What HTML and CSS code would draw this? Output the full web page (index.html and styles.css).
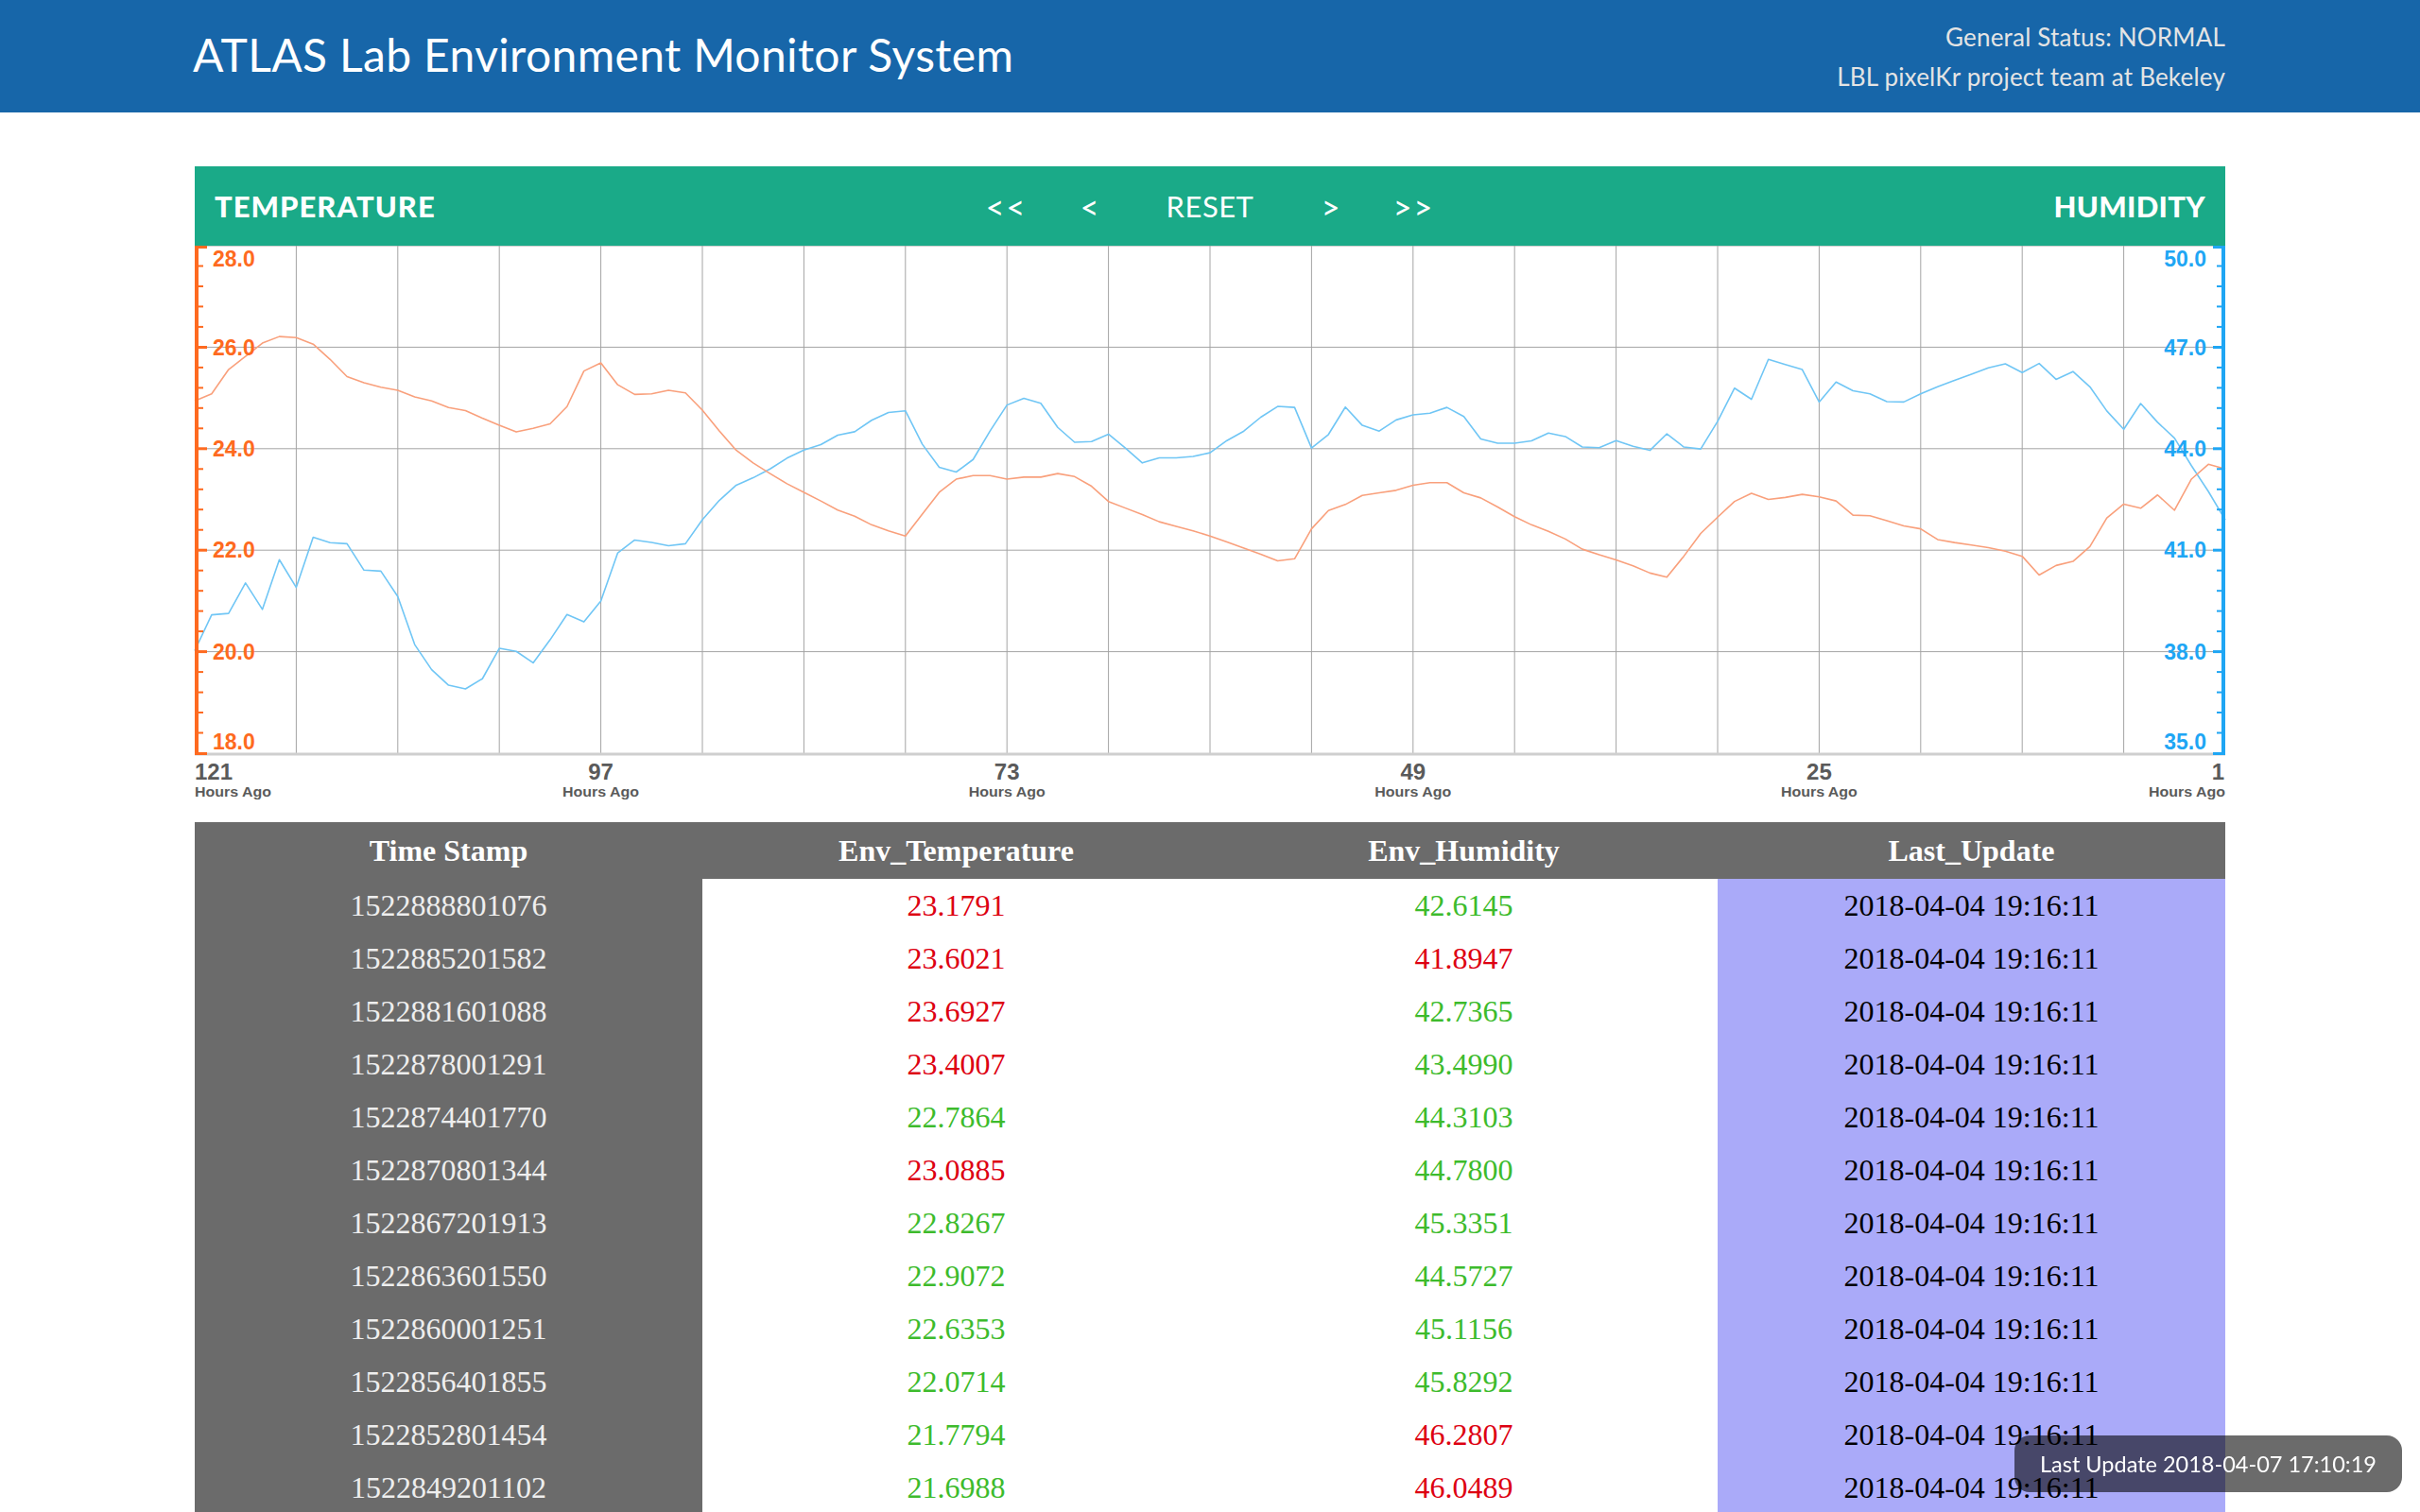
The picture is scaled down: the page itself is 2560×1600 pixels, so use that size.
FILE: index.html
```html
<!DOCTYPE html>
<html lang="en">
<head>
<meta charset="utf-8">
<title>ATLAS Lab Environment Monitor System</title>
<link rel="stylesheet" href="styles.css">
</head>
<body>
<header class="topbar">
  <h1 class="title">ATLAS Lab Environment Monitor System</h1>
  <div class="status">
    <div>General Status: NORMAL</div>
    <div>LBL pixelKr project team at Bekeley</div>
  </div>
</header>

<main class="content">
  <section class="chart-panel">
    <div class="chart-head">
      <span class="axis-title">TEMPERATURE</span>
      <nav class="chart-nav">
        <button class="nav-btn wide">&lt;&lt;</button>
        <button class="nav-btn narrow">&lt;</button>
        <button class="nav-btn reset">RESET</button>
        <button class="nav-btn narrow">&gt;</button>
        <button class="nav-btn wide">&gt;&gt;</button>
      </nav>
      <span class="axis-title right">HUMIDITY</span>
    </div>

    <svg class="chart" width="2148" height="610" viewBox="0 0 2148 610">
      <g class="grid">
        <line x1="0" y1="0.5" x2="2148" y2="0.5" class="border"/>
        <line x1="107.4" y1="0" x2="107.4" y2="538"/>
        <line x1="214.8" y1="0" x2="214.8" y2="538"/>
        <line x1="322.2" y1="0" x2="322.2" y2="538"/>
        <line x1="429.6" y1="0" x2="429.6" y2="538"/>
        <line x1="537" y1="0" x2="537" y2="538"/>
        <line x1="644.4" y1="0" x2="644.4" y2="538"/>
        <line x1="751.8" y1="0" x2="751.8" y2="538"/>
        <line x1="859.2" y1="0" x2="859.2" y2="538"/>
        <line x1="966.6" y1="0" x2="966.6" y2="538"/>
        <line x1="1074" y1="0" x2="1074" y2="538"/>
        <line x1="1181.4" y1="0" x2="1181.4" y2="538"/>
        <line x1="1288.8" y1="0" x2="1288.8" y2="538"/>
        <line x1="1396.2" y1="0" x2="1396.2" y2="538"/>
        <line x1="1503.6" y1="0" x2="1503.6" y2="538"/>
        <line x1="1611" y1="0" x2="1611" y2="538"/>
        <line x1="1718.4" y1="0" x2="1718.4" y2="538"/>
        <line x1="1825.8" y1="0" x2="1825.8" y2="538"/>
        <line x1="1933.2" y1="0" x2="1933.2" y2="538"/>
        <line x1="2040.6" y1="0" x2="2040.6" y2="538"/>
        <line x1="0" y1="107.4" x2="2148" y2="107.4"/>
        <line x1="0" y1="214.8" x2="2148" y2="214.8"/>
        <line x1="0" y1="322.2" x2="2148" y2="322.2"/>
        <line x1="0" y1="429.6" x2="2148" y2="429.6"/>
        <line x1="0" y1="538" x2="2148" y2="538" class="baseline"/>
      </g>

      <polyline class="line-hum" transform="matrix(17.9 0 0 -35.8 0 1790)" points="0,38.03 1,39.09 2,39.13 3,40.03 4,39.25 5,40.72 6,39.90 7,41.38 8,41.22 9,41.19 10,40.41 11,40.38 12,39.63 13,38.21 14,37.47 15,37.01 16,36.90 17,37.20 18,38.10 19,38.01 20,37.67 21,38.35 22,39.10 23,38.88 24,39.50 25,40.92 26,41.30 27,41.23 28,41.13 29,41.19 30,41.90 31,42.47 32,42.92 33,43.14 34,43.40 35,43.72 36,43.96 37,44.12 38,44.40 39,44.50 40,44.84 41,45.07 42,45.12 43,44.13 44,43.45 45,43.31 46,43.68 47,44.52 48,45.29 49,45.49 50,45.34 51,44.63 52,44.19 53,44.21 54,44.43 55,44.02 56,43.58 57,43.73 58,43.73 59,43.77 60,43.88 61,44.24 62,44.52 63,44.93 64,45.25 65,45.22 66,44.02 67,44.42 68,45.23 69,44.69 70,44.52 71,44.85 72,45.00 73,45.05 74,45.22 75,44.95 76,44.29 77,44.16 78,44.16 79,44.23 80,44.46 81,44.36 82,44.05 83,44.03 84,44.24 85,44.07 86,43.95 87,44.44 88,44.05 89,43.99 90,44.81 91,45.79 92,45.46 93,46.64 94,46.49 95,46.34 96,45.38 97,45.97 98,45.71 99,45.62 100,45.39 101,45.38 102,45.62 103,45.83 104,46.02 105,46.20 106,46.39 107,46.51 108,46.25 109,46.52 110,46.0489 111,46.2807 112,45.8292 113,45.1156 114,44.5727 115,45.3351 116,44.78 117,44.3103 118,43.499 119,42.7365 120,41.8947"/>

      <polyline class="line-temp" transform="matrix(17.9 0 0 -53.7 0 1503.6)" points="0,24.94 1,25.08 2,25.56 3,25.82 4,26.08 5,26.21 6,26.19 7,26.06 8,25.76 9,25.42 10,25.30 11,25.21 12,25.15 13,25.02 14,24.94 15,24.81 16,24.75 17,24.60 18,24.46 19,24.33 20,24.40 21,24.49 22,24.83 23,25.53 24,25.69 25,25.26 26,25.07 27,25.08 28,25.15 29,25.10 30,24.76 31,24.35 32,23.97 33,23.72 34,23.51 35,23.31 36,23.14 37,22.97 38,22.79 39,22.67 40,22.50 41,22.38 42,22.28 43,22.71 44,23.14 45,23.40 46,23.47 47,23.47 48,23.40 49,23.44 50,23.44 51,23.51 52,23.45 53,23.26 54,22.96 55,22.83 56,22.70 57,22.56 58,22.47 59,22.38 60,22.28 61,22.16 62,22.04 63,21.92 64,21.79 65,21.83 66,22.42 67,22.78 68,22.90 69,23.08 70,23.13 71,23.18 72,23.28 73,23.33 74,23.33 75,23.13 76,23.03 77,22.85 78,22.66 79,22.50 80,22.37 81,22.22 82,22.02 83,21.91 84,21.81 85,21.69 86,21.55 87,21.47 88,21.88 89,22.33 90,22.65 91,22.96 92,23.12 93,23.00 94,23.04 95,23.10 96,23.05 97,22.97 98,22.69 99,22.68 100,22.58 101,22.48 102,22.42 103,22.21 104,22.15 105,22.10 106,22.05 107,21.98 108,21.88 109,21.51 110,21.6988 111,21.7794 112,22.0714 113,22.6353 114,22.9072 115,22.8267 116,23.0885 117,22.7864 118,23.4007 119,23.6927 120,23.6021"/>

      <g class="axis-left">
        <rect x="0" y="0" width="4" height="539"/>
        <rect x="0" y="0" width="13" height="3"/>
        <rect x="0" y="536" width="13" height="3"/>
        <rect x="4" y="20.5" width="5" height="2"/>
        <rect x="4" y="42" width="5" height="2"/>
        <rect x="4" y="63.4" width="5" height="2"/>
        <rect x="4" y="84.9" width="5" height="2"/>
        <rect x="4" y="106" width="9" height="3"/>
        <rect x="4" y="127.9" width="5" height="2"/>
        <rect x="4" y="149.4" width="5" height="2"/>
        <rect x="4" y="170.8" width="5" height="2"/>
        <rect x="4" y="192.3" width="5" height="2"/>
        <rect x="4" y="213.3" width="9" height="3"/>
        <rect x="4" y="235.3" width="5" height="2"/>
        <rect x="4" y="256.8" width="5" height="2"/>
        <rect x="4" y="278.2" width="5" height="2"/>
        <rect x="4" y="299.7" width="5" height="2"/>
        <rect x="4" y="320.7" width="9" height="3"/>
        <rect x="4" y="342.7" width="5" height="2"/>
        <rect x="4" y="364.2" width="5" height="2"/>
        <rect x="4" y="385.6" width="5" height="2"/>
        <rect x="4" y="407.1" width="5" height="2"/>
        <rect x="4" y="428.1" width="9" height="3"/>
        <rect x="4" y="450.1" width="5" height="2"/>
        <rect x="4" y="471.6" width="5" height="2"/>
        <rect x="4" y="493" width="5" height="2"/>
        <rect x="4" y="514.5" width="5" height="2"/>
        <text x="19" y="22">28.0</text>
        <text x="19" y="115.6">26.0</text>
        <text x="19" y="223">24.0</text>
        <text x="19" y="330.4">22.0</text>
        <text x="19" y="437.8">20.0</text>
        <text x="19" y="532.5">18.0</text>
      </g>

      <g class="axis-right">
        <rect x="2144" y="0" width="4" height="539"/>
        <rect x="2135" y="0" width="13" height="3"/>
        <rect x="2135" y="536" width="13" height="3"/>
        <rect x="2139" y="20.5" width="5" height="2"/>
        <rect x="2139" y="42" width="5" height="2"/>
        <rect x="2139" y="63.4" width="5" height="2"/>
        <rect x="2139" y="84.9" width="5" height="2"/>
        <rect x="2135" y="106" width="9" height="3"/>
        <rect x="2139" y="127.9" width="5" height="2"/>
        <rect x="2139" y="149.4" width="5" height="2"/>
        <rect x="2139" y="170.8" width="5" height="2"/>
        <rect x="2139" y="192.3" width="5" height="2"/>
        <rect x="2135" y="213.3" width="9" height="3"/>
        <rect x="2139" y="235.3" width="5" height="2"/>
        <rect x="2139" y="256.8" width="5" height="2"/>
        <rect x="2139" y="278.2" width="5" height="2"/>
        <rect x="2139" y="299.7" width="5" height="2"/>
        <rect x="2135" y="320.7" width="9" height="3"/>
        <rect x="2139" y="342.7" width="5" height="2"/>
        <rect x="2139" y="364.2" width="5" height="2"/>
        <rect x="2139" y="385.6" width="5" height="2"/>
        <rect x="2139" y="407.1" width="5" height="2"/>
        <rect x="2135" y="428.1" width="9" height="3"/>
        <rect x="2139" y="450.1" width="5" height="2"/>
        <rect x="2139" y="471.6" width="5" height="2"/>
        <rect x="2139" y="493" width="5" height="2"/>
        <rect x="2139" y="514.5" width="5" height="2"/>
        <text x="2128" y="22">50.0</text>
        <text x="2128" y="115.6">47.0</text>
        <text x="2128" y="223">44.0</text>
        <text x="2128" y="330.4">41.0</text>
        <text x="2128" y="437.8">38.0</text>
        <text x="2128" y="532.5">35.0</text>
      </g>

      <g class="x-labels">
        <text class="hour start" x="0" y="565">121</text>
        <text class="ago start" x="0" y="583" textLength="81" lengthAdjust="spacingAndGlyphs">Hours Ago</text>
        <text class="hour" x="429.6" y="565">97</text>
        <text class="ago" x="429.6" y="583" textLength="81" lengthAdjust="spacingAndGlyphs">Hours Ago</text>
        <text class="hour" x="859.2" y="565">73</text>
        <text class="ago" x="859.2" y="583" textLength="81" lengthAdjust="spacingAndGlyphs">Hours Ago</text>
        <text class="hour" x="1288.8" y="565">49</text>
        <text class="ago" x="1288.8" y="583" textLength="81" lengthAdjust="spacingAndGlyphs">Hours Ago</text>
        <text class="hour" x="1718.4" y="565">25</text>
        <text class="ago" x="1718.4" y="583" textLength="81" lengthAdjust="spacingAndGlyphs">Hours Ago</text>
        <text class="hour end" x="2147" y="565">1</text>
        <text class="ago end" x="2148" y="583" textLength="81" lengthAdjust="spacingAndGlyphs">Hours Ago</text>
      </g>
    </svg>
  </section>

  <table class="data-table">
    <thead>
      <tr><th>Time Stamp</th><th>Env_Temperature</th><th>Env_Humidity</th><th>Last_Update</th></tr>
    </thead>
    <tbody>
      <tr><td class="ts">1522888801076</td><td class="hi">23.1791</td><td class="ok">42.6145</td><td class="upd">2018-04-04 19:16:11</td></tr>
      <tr><td class="ts">1522885201582</td><td class="hi">23.6021</td><td class="hi">41.8947</td><td class="upd">2018-04-04 19:16:11</td></tr>
      <tr><td class="ts">1522881601088</td><td class="hi">23.6927</td><td class="ok">42.7365</td><td class="upd">2018-04-04 19:16:11</td></tr>
      <tr><td class="ts">1522878001291</td><td class="hi">23.4007</td><td class="ok">43.4990</td><td class="upd">2018-04-04 19:16:11</td></tr>
      <tr><td class="ts">1522874401770</td><td class="ok">22.7864</td><td class="ok">44.3103</td><td class="upd">2018-04-04 19:16:11</td></tr>
      <tr><td class="ts">1522870801344</td><td class="hi">23.0885</td><td class="ok">44.7800</td><td class="upd">2018-04-04 19:16:11</td></tr>
      <tr><td class="ts">1522867201913</td><td class="ok">22.8267</td><td class="ok">45.3351</td><td class="upd">2018-04-04 19:16:11</td></tr>
      <tr><td class="ts">1522863601550</td><td class="ok">22.9072</td><td class="ok">44.5727</td><td class="upd">2018-04-04 19:16:11</td></tr>
      <tr><td class="ts">1522860001251</td><td class="ok">22.6353</td><td class="ok">45.1156</td><td class="upd">2018-04-04 19:16:11</td></tr>
      <tr><td class="ts">1522856401855</td><td class="ok">22.0714</td><td class="ok">45.8292</td><td class="upd">2018-04-04 19:16:11</td></tr>
      <tr><td class="ts">1522852801454</td><td class="ok">21.7794</td><td class="hi">46.2807</td><td class="upd">2018-04-04 19:16:11</td></tr>
      <tr><td class="ts">1522849201102</td><td class="ok">21.6988</td><td class="hi">46.0489</td><td class="upd">2018-04-04 19:16:11</td></tr>
    </tbody>
  </table>
</main>

<div class="toast">Last Update 2018-04-07 17:10:19</div>
</body>
</html>
```

FILE: styles.css
```css
html, body {
  margin: 0;
  padding: 0;
  background: #ffffff;
}

body {
  font-family: Lato, "Noto Sans", "Liberation Sans", sans-serif;
}

.topbar {
  height: 119px;
  box-sizing: border-box;
  padding: 0 206px 0 204px;
  background: #1766a9;
  display: flex;
  align-items: center;
  justify-content: space-between;
}

.title {
  margin: 0 0 3px;
  font-family: Lato, "Noto Sans", sans-serif;
  font-weight: 400;
  font-size: 48px;
  letter-spacing: 0.35px;
  line-height: 1;
  color: #ffffff;
}

.status {
  text-align: right;
  font-size: 26px;
  letter-spacing: 0.2px;
  line-height: 42px;
  color: #e4e4e4;
}

.content {
  padding: 57px 206px 0;
}

.chart-panel {
  width: 2148px;
}

.chart-head {
  height: 84px;
  box-sizing: border-box;
  padding: 0 21px;
  background: #1aaa88;
  display: grid;
  grid-template-columns: 1fr auto 1fr;
  align-items: center;
}

.axis-title {
  font-family: Lato, "Noto Sans", sans-serif;
  font-weight: 900;
  font-size: 31px;
  color: #ffffff;
  letter-spacing: 1px;
}

.axis-title.right {
  text-align: right;
  letter-spacing: 0.3px;
}

.chart-nav {
  display: flex;
  align-items: center;
}

.nav-btn {
  border: 0;
  padding: 0;
  margin: 0;
  background: none;
  color: #ffffff;
  font-family: Lato, "Noto Sans", sans-serif;
  font-size: 31px;
  font-weight: 400;
  text-align: center;
  cursor: pointer;
}

.nav-btn.wide { width: 116px; font-size: 34px; letter-spacing: 2px; }
.nav-btn.narrow { width: 60px; font-size: 34px; }
.nav-btn.reset { width: 195px; letter-spacing: 0.5px; }

.chart {
  display: block;
  overflow: visible;
}

.grid line {
  stroke: #a4a4a4;
  stroke-width: 1;
}

.grid line.border {
  stroke: #d0d0d0;
}

.grid line.baseline {
  stroke: #cfcfcf;
  stroke-width: 3;
}

.line-temp,
.line-hum {
  fill: none;
  stroke-width: 1.6;
  stroke-linejoin: round;
  vector-effect: non-scaling-stroke;
}

.line-temp { stroke: #f9a07c; }
.line-hum { stroke: #70c6f5; }

.axis-left rect { fill: #fe6a20; }
.axis-right rect { fill: #1fa6f4; }

.axis-left text,
.axis-right text {
  font-family: "Liberation Sans", Arial, sans-serif;
  font-weight: 700;
  font-size: 23px;
}

.axis-left text { fill: #fe6a20; }
.axis-right text { fill: #1fa6f4; text-anchor: end; }

.x-labels text {
  font-family: "Liberation Sans", Arial, sans-serif;
  font-weight: 700;
  fill: #5a5a5a;
  text-anchor: middle;
}

.x-labels .hour { font-size: 24px; }
.x-labels .ago { font-size: 14px; }
.x-labels .start { text-anchor: start; }
.x-labels .end { text-anchor: end; }

.data-table {
  width: 2148px;
  border-collapse: collapse;
  table-layout: fixed;
  font-family: "Liberation Serif", "Times New Roman", serif;
  font-size: 32px;
}

.data-table th {
  height: 60px;
  padding: 0;
  background: #6b6b6b;
  color: #ffffff;
  font-weight: 700;
  text-align: center;
}

.data-table td {
  height: 56px;
  padding: 0;
  text-align: center;
}

.data-table td.ts {
  background: #6b6b6b;
  color: #eeeeee;
}

.data-table td.hi { color: #dd0011; }
.data-table td.ok { color: #3dbb2c; }

.data-table td.upd {
  background: #aaaaf9;
  color: #000000;
}

.toast {
  position: fixed;
  right: 19px;
  bottom: 21px;
  height: 60px;
  box-sizing: border-box;
  padding: 0 27px;
  display: flex;
  align-items: center;
  border-radius: 16px;
  background: rgba(0, 0, 0, 0.58);
  color: #ffffff;
  font-family: Lato, "Noto Sans", sans-serif;
  font-size: 23.5px;
}
```
